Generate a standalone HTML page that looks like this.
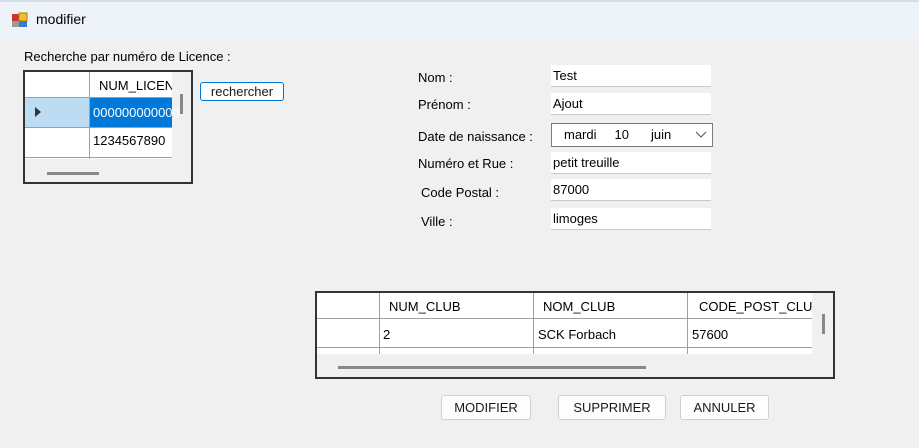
<!DOCTYPE html><html><head><style>
*{margin:0;padding:0;box-sizing:border-box}
body{width:919px;height:448px;background:#f0f0f0;font-family:"Liberation Sans",sans-serif;font-size:13px;color:#000;position:relative;overflow:hidden}
.a{position:absolute}
.tb{position:absolute;left:551px;width:160px;height:22px;background:#fff;border-bottom:1px solid #c8c8c8;padding:3px 0 0 2px;font-size:13px}
.lb{position:absolute;font-size:13px}
.btn{position:absolute;height:25px;background:#fdfdfd;border:1px solid #d0d0d0;border-radius:3px;text-align:center;line-height:23px;font-size:13px;color:#1a1a1a}
</style></head><body>
<div class="a" style="left:0;top:0;width:919px;height:40px;background:#eef3f9"></div>
<div class="a" style="left:0;top:0;width:919px;height:2px;background:#d8dde3"></div>
<svg class="a" style="left:11px;top:11px" width="18" height="18"><rect x="1" y="3" width="7" height="7" fill="#c33"/><rect x="8" y="2" width="8" height="8" fill="#f0c030" stroke="#b08000"/><rect x="1" y="10" width="7" height="6" fill="#999"/><rect x="8" y="10" width="8" height="6" fill="#3a7bd5"/></svg>
<div class="a" style="left:36px;top:11px;font-size:14px">modifier</div>
<div class="lb" style="left:24px;top:49px">Recherche par numéro de Licence :</div>
<div class="a" style="left:23px;top:70px;width:170px;height:114px;border:2px solid #333;background:#f0f0f0;overflow:hidden">
 <div class="a" style="left:0;top:0;width:147px;height:87px;background:#fff"></div>
 <div class="a" style="left:64px;top:0;width:1px;height:87px;background:#a0a0a0"></div>
 <div class="a" style="left:0;top:25px;width:147px;height:1px;background:#a0a0a0"></div>
 <div class="a" style="left:0;top:26px;width:64px;height:29px;background:#bcdcf4"></div>
 <div class="a" style="left:65px;top:26px;width:82px;height:29px;background:#0078d7;color:#fff;font-size:13px;padding:7px 0 0 3px;white-space:nowrap">000000000000</div>
 <div class="a" style="left:10px;top:35px;width:0;height:0;border-left:6px solid #333;border-top:5px solid transparent;border-bottom:5px solid transparent"></div>
 <div class="a" style="left:0;top:55px;width:147px;height:1px;background:#a0a0a0"></div>
 <div class="a" style="left:68px;top:61px;font-size:13px">1234567890</div>
 <div class="a" style="left:0;top:85px;width:147px;height:1px;background:#a0a0a0"></div>
 <div class="a" style="left:74px;top:6px;font-size:13px;white-space:nowrap;width:73px;overflow:hidden">NUM_LICENCE</div>
 <div class="a" style="left:155px;top:22px;width:3px;height:20px;background:#888"></div>
 <div class="a" style="left:22px;top:100px;width:52px;height:3px;background:#888"></div>
</div>
<div class="btn" style="left:200px;top:82px;width:84px;height:19px;line-height:17px;border:1px solid #0078d7;font-size:13px">rechercher</div>
<div class="lb" style="left:418px;top:70px">Nom :</div>
<div class="lb" style="left:418px;top:97px">Prénom :</div>
<div class="lb" style="left:418px;top:129px">Date de naissance :</div>
<div class="lb" style="left:418px;top:156px">Numéro et Rue :</div>
<div class="lb" style="left:421px;top:185px">Code Postal :</div>
<div class="lb" style="left:421px;top:214px">Ville :</div>
<div class="tb" style="top:65px">Test</div>
<div class="tb" style="top:93px">Ajout</div>
<div class="a" style="left:551px;top:123px;width:162px;height:24px;background:#fff;border:1px solid #7a7a7a;font-size:13px;padding-top:3px"><span style="margin-left:12px">mardi</span><span style="margin-left:18px">10</span><span style="margin-left:22px">juin</span><svg class="a" style="left:143px;top:7px" width="12" height="8"><path d="M1 1 L6 6 L11 1" stroke="#555" fill="none"/></svg></div>
<div class="tb" style="top:152px">petit treuille</div>
<div class="tb" style="top:179px">87000</div>
<div class="tb" style="top:208px">limoges</div>
<div class="a" style="left:315px;top:291px;width:520px;height:88px;border:2px solid #333;background:#f0f0f0;overflow:hidden">
 <div class="a" style="left:0;top:0;width:495px;height:61px;background:#fff"></div>
 <div class="a" style="left:0;top:25px;width:495px;height:1px;background:#a0a0a0"></div>
 <div class="a" style="left:0;top:54px;width:495px;height:1px;background:#a0a0a0"></div>
 <div class="a" style="left:62px;top:0;width:1px;height:61px;background:#a0a0a0"></div>
 <div class="a" style="left:216px;top:0;width:1px;height:61px;background:#a0a0a0"></div>
 <div class="a" style="left:370px;top:0;width:1px;height:61px;background:#a0a0a0"></div>
 <div class="a" style="left:72px;top:6px;font-size:13px">NUM_CLUB</div>
 <div class="a" style="left:226px;top:6px;font-size:13px">NOM_CLUB</div>
 <div class="a" style="left:382px;top:6px;font-size:13px;white-space:nowrap;width:113px;overflow:hidden">CODE_POST_CLUB</div>
 <div class="a" style="left:66px;top:34px;font-size:13px">2</div>
 <div class="a" style="left:221px;top:34px;font-size:13px">SCK Forbach</div>
 <div class="a" style="left:375px;top:34px;font-size:13px">57600</div>
 <div class="a" style="left:505px;top:21px;width:3px;height:20px;background:#888"></div>
 <div class="a" style="left:21px;top:73px;width:308px;height:3px;background:#888"></div>
</div>
<div class="btn" style="left:441px;top:395px;width:90px">MODIFIER</div>
<div class="btn" style="left:558px;top:395px;width:108px">SUPPRIMER</div>
<div class="btn" style="left:680px;top:395px;width:89px">ANNULER</div>
</body></html>
